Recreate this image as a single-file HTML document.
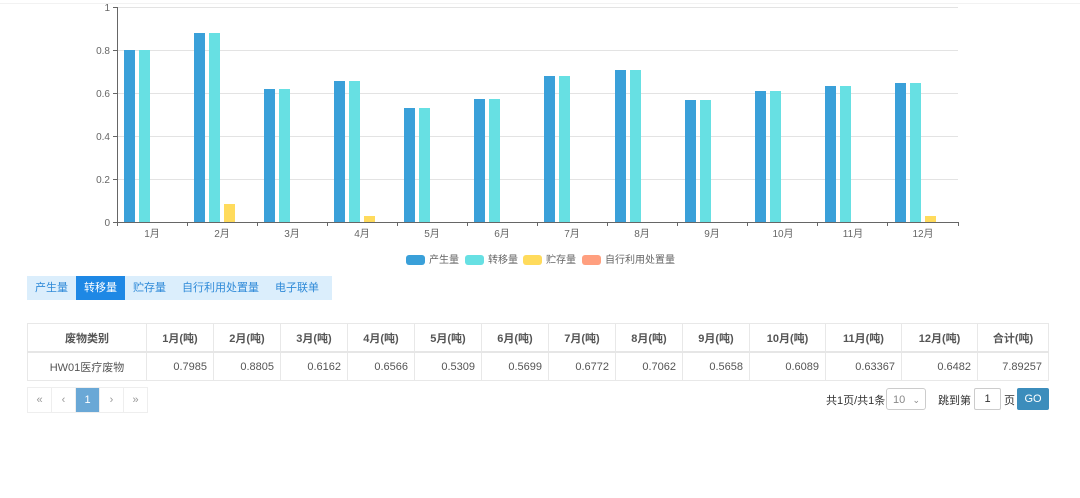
<!DOCTYPE html>
<html><head><meta charset="utf-8"><style>
body{margin:0;width:1080px;height:498px;background:#fff;font-family:"Liberation Sans","Noto Sans CJK SC",sans-serif;position:relative;overflow:hidden}
.a{position:absolute}
.tabs{left:27px;top:276px;height:24px;width:305px;background:#dbeefc;display:flex;font-size:11px;color:#2f8ad8;white-space:nowrap}
.tabs div{line-height:24px;padding:0 8px}
.tabs .on{background:#1e88e5;color:#fff}
table{position:absolute;left:27px;top:323px;border-collapse:collapse;font-size:11px;color:#555}
td,th{border:1px solid #e8e8e8;height:27px;padding:0 6px}
th{font-weight:bold;color:#555;text-align:center;border-bottom:2px solid #e6e6e6}
td{text-align:right}
.pg{left:27px;top:387px;display:flex;border:1px solid #eee}
.pg div{width:23px;height:24px;line-height:24px;text-align:center;font-size:11px;color:#999;border-right:1px solid #eee}
.pg .on{background:#6aa8d6;color:#fff}
</style></head><body>
<div class="a" style="left:0;top:0;width:1080px;height:3px;border-bottom:1px solid #f2f2f2"></div>
<svg class="a" style="left:0;top:0" width="1080" height="270" font-family="Liberation Sans,Noto Sans CJK SC,sans-serif" font-size="10" fill="#666">
<g stroke="#e3e3e3"><line x1="117" x2="958" y1="7.5" y2="7.5"/><line x1="117" x2="958" y1="50.5" y2="50.5"/><line x1="117" x2="958" y1="93.5" y2="93.5"/><line x1="117" x2="958" y1="136.5" y2="136.5"/><line x1="117" x2="958" y1="179.5" y2="179.5"/></g>
<g stroke="#666"><line x1="117.5" x2="117.5" y1="7" y2="222"/><line x1="113" x2="117" y1="7.5" y2="7.5"/><line x1="113" x2="117" y1="50.5" y2="50.5"/><line x1="113" x2="117" y1="93.5" y2="93.5"/><line x1="113" x2="117" y1="136.5" y2="136.5"/><line x1="113" x2="117" y1="179.5" y2="179.5"/><line x1="113" x2="958" y1="222.5" y2="222.5"/>
<line x1="117.5" x2="117.5" y1="222" y2="226"/><line x1="187.5" x2="187.5" y1="222" y2="226"/><line x1="257.5" x2="257.5" y1="222" y2="226"/><line x1="327.5" x2="327.5" y1="222" y2="226"/><line x1="397.5" x2="397.5" y1="222" y2="226"/><line x1="467.5" x2="467.5" y1="222" y2="226"/><line x1="537.5" x2="537.5" y1="222" y2="226"/><line x1="607.5" x2="607.5" y1="222" y2="226"/><line x1="677.5" x2="677.5" y1="222" y2="226"/><line x1="747.5" x2="747.5" y1="222" y2="226"/><line x1="817.5" x2="817.5" y1="222" y2="226"/><line x1="887.5" x2="887.5" y1="222" y2="226"/><line x1="958.5" x2="958.5" y1="222" y2="226"/></g>
<g text-anchor="end"><text x="110" y="11">1</text><text x="110" y="54">0.8</text><text x="110" y="97">0.6</text><text x="110" y="140">0.4</text><text x="110" y="183">0.2</text><text x="110" y="226">0</text></g>
<g text-anchor="middle"><text x="152" y="237">1月</text><text x="222" y="237">2月</text><text x="292" y="237">3月</text><text x="362" y="237">4月</text><text x="432" y="237">5月</text><text x="502" y="237">6月</text><text x="572" y="237">7月</text><text x="642" y="237">8月</text><text x="712" y="237">9月</text><text x="783" y="237">10月</text><text x="853" y="237">11月</text><text x="923" y="237">12月</text></g>
<g fill="#3aa0d9"><rect x="124" y="50" width="11" height="172"/><rect x="194" y="33" width="11" height="189"/><rect x="264" y="89" width="11" height="133"/><rect x="334" y="81" width="11" height="141"/><rect x="404" y="108" width="11" height="114"/><rect x="474" y="99" width="11" height="123"/><rect x="544" y="76" width="11" height="146"/><rect x="615" y="70" width="11" height="152"/><rect x="685" y="100" width="11" height="122"/><rect x="755" y="91" width="11" height="131"/><rect x="825" y="86" width="11" height="136"/><rect x="895" y="83" width="11" height="139"/></g>
<g fill="#67e0e3"><rect x="139" y="50" width="11" height="172"/><rect x="209" y="33" width="11" height="189"/><rect x="279" y="89" width="11" height="133"/><rect x="349" y="81" width="11" height="141"/><rect x="419" y="108" width="11" height="114"/><rect x="489" y="99" width="11" height="123"/><rect x="559" y="76" width="11" height="146"/><rect x="630" y="70" width="11" height="152"/><rect x="700" y="100" width="11" height="122"/><rect x="770" y="91" width="11" height="131"/><rect x="840" y="86" width="11" height="136"/><rect x="910" y="83" width="11" height="139"/></g>
<g fill="#ffdb5c"><rect x="224" y="204" width="11" height="18"/><rect x="364" y="216" width="11" height="6"/><rect x="925" y="216" width="11" height="6"/></g>
<rect x="406" y="255" width="19" height="10" rx="3" fill="#3aa0d9"/><text x="429" y="263">产生量</text>
<rect x="465" y="255" width="19" height="10" rx="3" fill="#67e0e3"/><text x="488" y="263">转移量</text>
<rect x="523" y="255" width="19" height="10" rx="3" fill="#ffdb5c"/><text x="546" y="263">贮存量</text>
<rect x="582" y="255" width="19" height="10" rx="3" fill="#ff9f7f"/><text x="605" y="263">自行利用处置量</text>
</svg>
<div class="a tabs"><div>产生量</div><div class="on">转移量</div><div>贮存量</div><div>自行利用处置量</div><div>电子联单</div></div>
<table>
<tr><th style="width:106px">废物类别</th><th style="width:54px">1月(吨)</th><th style="width:54px">2月(吨)</th><th style="width:54px">3月(吨)</th><th style="width:54px">4月(吨)</th><th style="width:54px">5月(吨)</th><th style="width:54px">6月(吨)</th><th style="width:54px">7月(吨)</th><th style="width:54px">8月(吨)</th><th style="width:54px">9月(吨)</th><th style="width:63px">10月(吨)</th><th style="width:63px">11月(吨)</th><th style="width:63px">12月(吨)</th><th style="width:58px">合计(吨)</th></tr>
<tr><td style="text-align:center">HW01医疗废物</td><td>0.7985</td><td>0.8805</td><td>0.6162</td><td>0.6566</td><td>0.5309</td><td>0.5699</td><td>0.6772</td><td>0.7062</td><td>0.5658</td><td>0.6089</td><td>0.63367</td><td>0.6482</td><td>7.89257</td></tr>
</table>
<div class="a pg"><div>«</div><div>‹</div><div class="on">1</div><div>›</div><div style="border:0">»</div></div>
<div class="a" style="left:826px;top:392px;font-size:11px;color:#333">共1页/共1条</div>
<div class="a" style="left:886px;top:388px;width:40px;height:22px;border:1px solid #ccc;border-radius:3px;font-size:11px;color:#888;line-height:22px;box-sizing:border-box;padding-left:6px">10 <span style="position:absolute;right:5px;font-size:9px">⌄</span></div>
<div class="a" style="left:938px;top:392px;font-size:11px;color:#333">跳到第</div>
<div class="a" style="left:974px;top:388px;width:27px;height:22px;border:1px solid #ccc;border-radius:2px;box-sizing:border-box;font-size:11px;text-align:center;line-height:20px;color:#333">1</div>
<div class="a" style="left:1004px;top:392px;font-size:11px;color:#333">页</div>
<div class="a" style="left:1017px;top:388px;width:32px;height:22px;background:#3c8dbc;color:#fff;font-size:11px;text-align:center;line-height:22px;border-radius:2px">GO</div>
</body></html>
